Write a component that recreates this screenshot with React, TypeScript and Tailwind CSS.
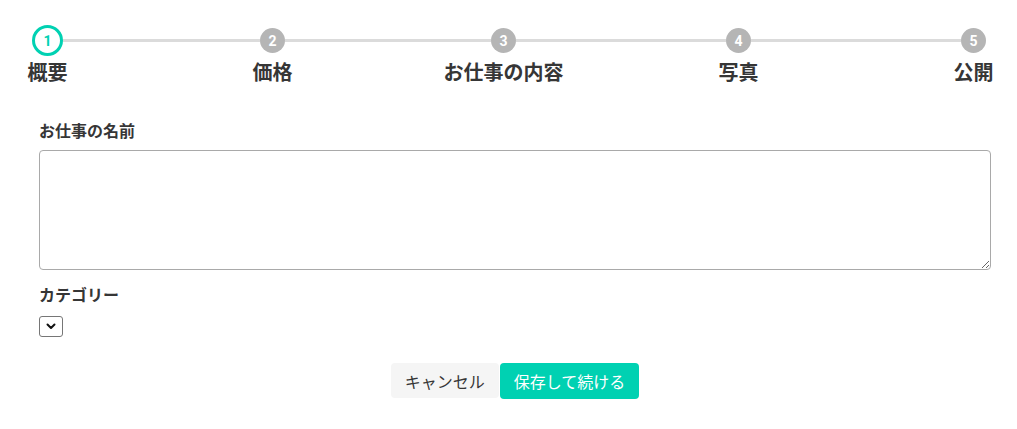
import React from 'react';

const STEPS = [
  { n: 1, label: '概要' },
  { n: 2, label: '価格' },
  { n: 3, label: 'お仕事の内容' },
  { n: 4, label: '写真' },
  { n: 5, label: '公開' },
];

// widths of the connector lines between the step nodes
const LINE_WIDTHS = ['w-[197px]', 'w-[206px]', 'w-[210px]', 'w-[210px]'];

const Step: React.FC<{ n: number; label: string; active?: boolean }> = ({ n, label, active }) => (
  <div className={`flex flex-col items-center shrink-0 ${active ? 'w-[31px]' : 'w-[25px]'}`}>
    <div className="h-[31px] flex items-center justify-center">
      {active ? (
        <div className="w-[31px] h-[31px] rounded-full border-[3px] border-[#00d1b2] bg-white flex items-center justify-center text-[#00d1b2] text-[14px] font-bold leading-none font-['Roboto',sans-serif]">
          {n}
        </div>
      ) : (
        <div className="w-[25px] h-[25px] rounded-full bg-[#b5b5b5] flex items-center justify-center text-white text-[14px] font-bold leading-none font-['Roboto',sans-serif]">
          {n}
        </div>
      )}
    </div>
    <div className="mt-[4px] text-[20px] leading-[24px] font-bold text-[#363636] whitespace-nowrap">{label}</div>
  </div>
);

const App: React.FC = () => {
  return (
    <div className="min-h-screen bg-white font-['Noto_Sans_CJK_JP','Noto_Sans',sans-serif] text-[#363636]">
      {/* Stepper */}
      <div className="flex items-start pl-[32px] pt-[25px]">
        {STEPS.map((s, i) => (
          <React.Fragment key={s.n}>
            <Step n={s.n} label={s.label} active={i === 0} />
            {i < STEPS.length - 1 && (
              <div className={`h-[3px] mt-[14px] bg-[#dbdbdb] shrink-0 ${LINE_WIDTHS[i]}`} />
            )}
          </React.Fragment>
        ))}
      </div>

      {/* Form */}
      <div className="px-[39px] w-[1030px] max-w-full">
        <div className="w-[952px]">
          <label className="block mt-[34px] text-[16px] leading-[24px] font-bold">お仕事の名前</label>
          <textarea className="block mt-[8px] w-full h-[120px] border border-[#a9a9a9] rounded-[4px] p-2 text-[16px] resize" />

          <label className="block mt-[12px] text-[16px] leading-[24px] font-bold">カテゴリー</label>
          <div className="mt-[10px] w-[24px] h-[21px] border border-[#767676] rounded-[3px] bg-white flex items-center justify-center">
            <svg width="10" height="7" viewBox="0 0 10 7" fill="none">
              <path d="M1.5 1.5 L5 5 L8.5 1.5" stroke="#111" strokeWidth="2" strokeLinecap="round" strokeLinejoin="round" />
            </svg>
          </div>

          <div className="mt-[26px] flex justify-center gap-[1px]">
            <button className="h-[35px] px-[14px] rounded-[4px] bg-[#f5f5f5] text-[#363636] text-[16px] leading-none">
              キャンセル
            </button>
            <button className="h-[36px] px-[14px] rounded-[4px] bg-[#00d1b2] text-white text-[16px] leading-none">
              保存して続ける
            </button>
          </div>
        </div>
      </div>
    </div>
  );
};

export default App;
